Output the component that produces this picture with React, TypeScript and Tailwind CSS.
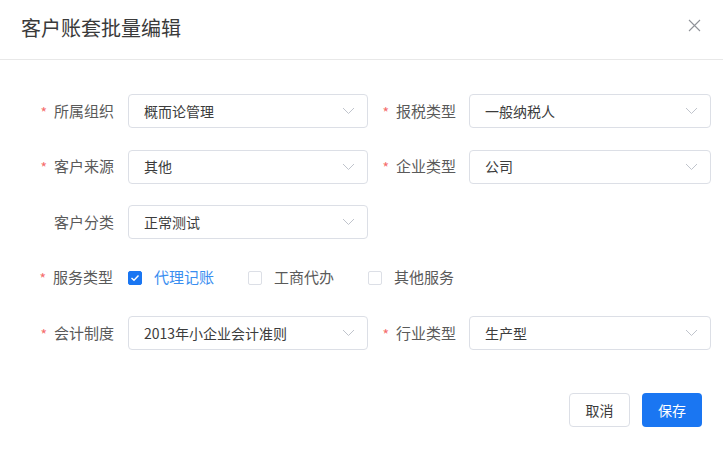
import React from "react";

const font = { fontFamily: '"Noto Sans CJK SC", "Noto Sans", sans-serif' };

function Chevron() {
  return (
    <svg width="13" height="8" viewBox="0 0 13 8" fill="none">
      <path d="M1 1 L6.5 6.5 L12 1" stroke="#c0c4cc" strokeWidth="1" />
    </svg>
  );
}

function Select({ value, w }: { value: string; w: string }) {
  return (
    <div
      className={`${w} h-[34px] border border-[#dcdfe6] rounded-[4px] flex items-center justify-between pl-[15px] pr-[12px] text-[14px] text-[#3c3c3c]`}
    >
      <span>{value}</span>
      <Chevron />
    </div>
  );
}

function Label({ text, req, w, pr }: { text: string; req?: boolean; w: string; pr: string }) {
  return (
    <div className={`${w} ${pr} flex items-center justify-end text-[15px] text-[#5a5a5a] shrink-0`}>
      {req && <span className="text-[#f56c6c] mr-[7px] text-[14px] mt-[2px]">*</span>}
      <span>{text}</span>
    </div>
  );
}

function Checkbox({ checked, text }: { checked?: boolean; text: string }) {
  return (
    <div className="flex items-center">
      <div
        className={`w-[14px] h-[14px] rounded-[2px] border flex items-center justify-center ${
          checked ? "bg-[#1a76f2] border-[#1a76f2]" : "bg-white border-[#dcdfe6]"
        }`}
      >
        {checked && (
          <svg width="10" height="8" viewBox="0 0 10 8" fill="none">
            <path d="M1.5 4 L4 6.3 L8.5 1.5" stroke="white" strokeWidth="1.4" />
          </svg>
        )}
      </div>
      <span className={`ml-[12px] text-[15px] ${checked ? "text-[#3a8ef0]" : "text-[#5a5a5a]"}`}>{text}</span>
    </div>
  );
}

export default function App() {
  return (
    <div className="w-[723px] h-[449px] bg-white flex flex-col" style={font}>
      <div className="h-[60px] border-b border-[#e8e8e8] flex items-center justify-between pl-[21px] pr-[22px]">
        <span className="text-[20px] text-[#3a3a3a] mt-[-4px]">客户账套批量编辑</span>
        <svg width="13" height="13" viewBox="0 0 13 13" fill="none" className="mt-[-8px]">
          <path d="M1 1 L12 12 M12 1 L1 12" stroke="#909399" strokeWidth="1.1" />
        </svg>
      </div>
      <div className="pt-[34px] flex flex-col gap-[21.5px]">
        <div className="flex h-[34px]">
          <Label text="所属组织" req w="w-[128px]" pr="pr-[14px]" />
          <Select value="概而论管理" w="w-[240px]" />
          <Label text="报税类型" req w="w-[101px]" pr="pr-[13px]" />
          <Select value="一般纳税人" w="w-[242px]" />
        </div>
        <div className="flex h-[34px]">
          <Label text="客户来源" req w="w-[128px]" pr="pr-[14px]" />
          <Select value="其他" w="w-[240px]" />
          <Label text="企业类型" req w="w-[101px]" pr="pr-[13px]" />
          <Select value="公司" w="w-[242px]" />
        </div>
        <div className="flex h-[34px]">
          <Label text="客户分类" w="w-[128px]" pr="pr-[14px]" />
          <Select value="正常测试" w="w-[240px]" />
        </div>
        <div className="flex h-[34px]">
          <Label text="服务类型" req w="w-[128px]" pr="pr-[15px]" />
          <div className="flex items-center gap-[34px]">
            <Checkbox checked text="代理记账" />
            <Checkbox text="工商代办" />
            <Checkbox text="其他服务" />
          </div>
        </div>
        <div className="flex h-[34px]">
          <Label text="会计制度" req w="w-[128px]" pr="pr-[14px]" />
          <Select value="2013年小企业会计准则" w="w-[240px]" />
          <Label text="行业类型" req w="w-[101px]" pr="pr-[13px]" />
          <Select value="生产型" w="w-[242px]" />
        </div>
      </div>
      <div className="flex justify-end gap-[12px] pr-[21px] mt-[43px]">
        <button className="w-[61px] h-[34px] border border-[#dcdfe6] rounded-[4px] bg-white text-[14px] text-[#3c3c3c]">
          取消
        </button>
        <button className="w-[60px] h-[34px] rounded-[4px] bg-[#1a76f2] text-[14px] text-white">保存</button>
      </div>
    </div>
  );
}
